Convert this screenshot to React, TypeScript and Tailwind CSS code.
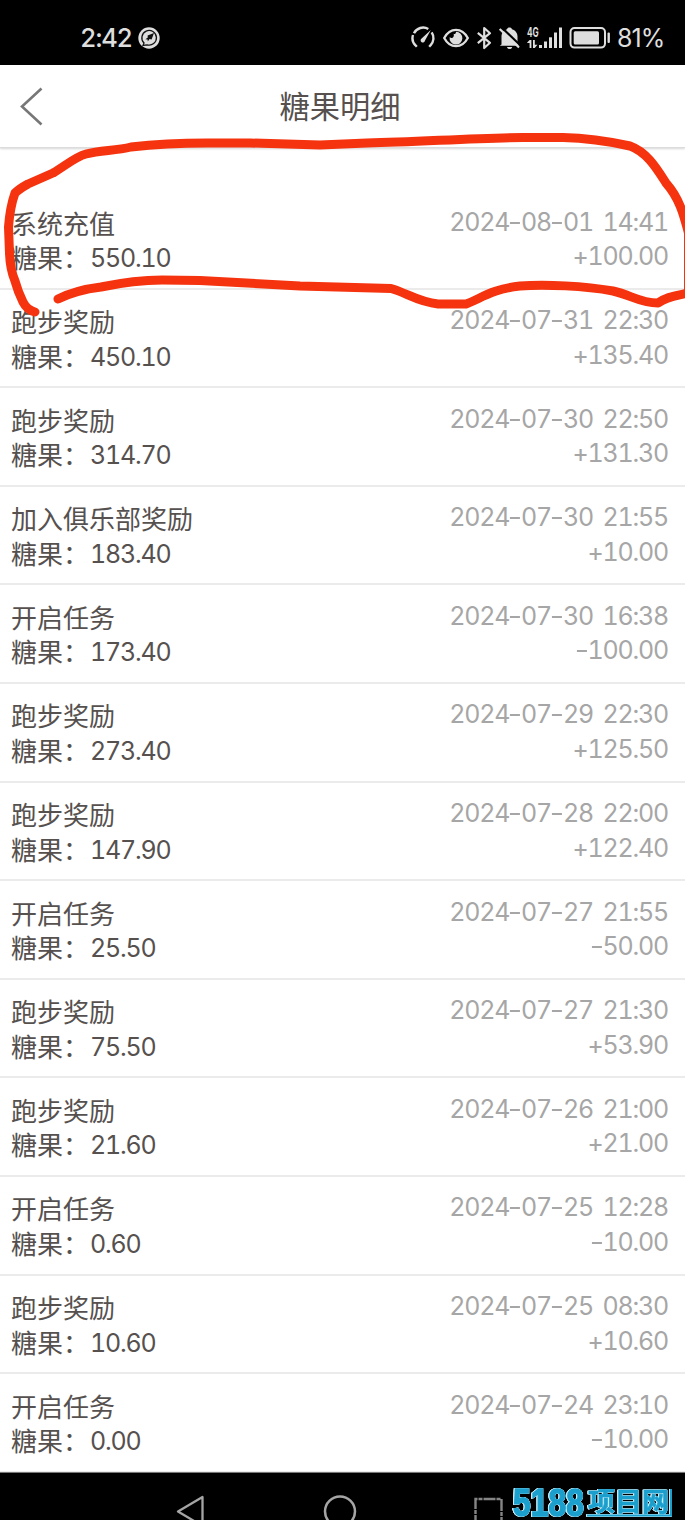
import React from "react";

type Entry = { title: string; balance: string; time: string; change: string };

const entries: Entry[] = [
  { title: "系统充值", balance: "550.10", time: "2024-08-01 14:41", change: "+100.00" },
  { title: "跑步奖励", balance: "450.10", time: "2024-07-31 22:30", change: "+135.40" },
  { title: "跑步奖励", balance: "314.70", time: "2024-07-30 22:50", change: "+131.30" },
  { title: "加入俱乐部奖励", balance: "183.40", time: "2024-07-30 21:55", change: "+10.00" },
  { title: "开启任务", balance: "173.40", time: "2024-07-30 16:38", change: "-100.00" },
  { title: "跑步奖励", balance: "273.40", time: "2024-07-29 22:30", change: "+125.50" },
  { title: "跑步奖励", balance: "147.90", time: "2024-07-28 22:00", change: "+122.40" },
  { title: "开启任务", balance: "25.50", time: "2024-07-27 21:55", change: "-50.00" },
  { title: "跑步奖励", balance: "75.50", time: "2024-07-27 21:30", change: "+53.90" },
  { title: "跑步奖励", balance: "21.60", time: "2024-07-26 21:00", change: "+21.00" },
  { title: "开启任务", balance: "0.60", time: "2024-07-25 12:28", change: "-10.00" },
  { title: "跑步奖励", balance: "10.60", time: "2024-07-25 08:30", change: "+10.60" },
  { title: "开启任务", balance: "0.00", time: "2024-07-24 23:10", change: "-10.00" },
];

function StatusBar() {
  return (
    <header className="flex h-[65px] items-center bg-black pt-[11px] pl-[80px] text-[#dedede]">
      <span className="w-[58px] font-['Inter',sans-serif] text-[25.5px] leading-none font-medium tracking-[-1.1px] tabular-nums">
        2:42
      </span>
      <svg className="h-[22px] w-[22px]" viewBox="0 0 22 22">
        <circle cx="11" cy="11" r="10.7" fill="#dedede" />
        <path d="M5 18.5L6 16A7.3 7.3 0 1 1 9 17.8Z" fill="none" stroke="#111" strokeWidth="1.3" />
        <path d="M16 6L13.6 12.4L11.5 12L9.8 14.5L9.6 12.5L7.4 12.2L9.8 10.4L9.6 8.5Z" fill="#111" />
      </svg>
      <div className="ml-[251px] flex items-center">
        <svg className="h-[24px] w-[24px]" viewBox="0 0 24 24" fill="none" stroke="#dedede" strokeWidth="2.4">
          <path d="M5.8 20.7L4.5 19.3A10.2 10.2 0 0 1 2 9" />
          <path d="M3 7.2A10.2 10.2 0 0 1 17.3 3" />
          <path d="M20.7 6.3A10.3 10.3 0 0 1 19.5 19.3L18.2 20.7" />
          <path d="M19.8 4L14 14.5A2.2 2.2 0 1 1 10.600 12.5Z" fill="#dedede" stroke="none" />
        </svg>
        <svg className="ml-[8px] h-[20px] w-[26px]" viewBox="0 0 26 20">
          <path d="M1.2 10C7-.9 19-.9 24.8 10C19 20.9 7 20.9 1.2 10Z" fill="none" stroke="#dedede" strokeWidth="2.3" />
          <path d="M13 3.800A6.4 6.4 0 1 1 6.7 9C8.500 11.500 12 9 10.500 5.800C11.500 6.500 13 6 13 3.800Z" fill="#dedede" />
        </svg>
        <svg className="ml-[7px] h-[24px] w-[16px]" viewBox="0 0 16 24">
          <path
            d="M1.8 6.8L14 16.8L8.2 22V2L14 7.2L1.8 17.2"
            fill="none"
            stroke="#dedede"
            strokeWidth="2.2"
            strokeLinejoin="round"
          />
        </svg>
        <svg className="ml-[6px] h-[24px] w-[23px]" viewBox="0 0 23 24">
          <path
            d="M3.5 18.5V10.5C3.5 6.8 6 4 9 3.2C9.4 .8 13.5 .8 14 3.2C17.3 4.2 19.5 7 19.5 10.5V16L21 19.8H1.8Z"
            fill="#dedede"
          />
          <path d="M9 21H14.2C13.8 23.8 9.5 23.8 9 21Z" fill="#dedede" />
          <path d="M3.6 1.4L22.5 19.5" stroke="#000" strokeWidth="2.2" />
          <path d="M1.7 3L21 21.5" stroke="#dedede" strokeWidth="2.2" />
        </svg>
        <svg className="ml-[6px] h-[24px] w-[36px]" viewBox="0 0 36 24" fill="#dedede">
          <text
            x="0"
            y="11"
            fontFamily="Inter, sans-serif"
            fontSize="13.5"
            fontWeight="700"
            textLength="11.8"
            lengthAdjust="spacingAndGlyphs"
          >
            4G
          </text>
          <path d="M.2 16.6L2.600 14H4.400V22H2.600V17H.2Z" />
          <path d="M6 14H7.800V18.800H10.400L7.800 22H6Z" />
          <rect x="12" y="19" width="3" height="3" />
          <rect x="17" y="15.5" width="3" height="6.5" />
          <rect x="22" y="11.3" width="3" height="10.7" />
          <rect x="27" y="6.5" width="3" height="15.5" />
          <rect x="32" y="1.5" width="3" height="20.5" />
        </svg>
        <svg className="ml-[6px] h-[24px] w-[42px]" viewBox="0 0 42 24">
          <rect x="1.5" y="2" width="34.5" height="19.6" rx="4" fill="none" stroke="#dedede" strokeWidth="2" />
          <rect x="4.7" y="5.2" width="25.3" height="13.2" rx="1.5" fill="#dedede" />
          <rect x="38.5" y="6.5" width="2.4" height="10.5" rx="1" fill="#dedede" />
        </svg>
        <span className="ml-[6px] pt-px font-['Inter',sans-serif] text-[25px] leading-none tracking-[-1px]">81%</span>
      </div>
    </header>
  );
}

function TitleBar() {
  return (
    <div className="relative flex h-[83px] items-center justify-center border-b border-[#dcdcdc] bg-white pr-[5px] pb-[2px] shadow-[0_1px_2px_rgba(0,0,0,0.16)]">
      <svg className="absolute top-[22px] left-[19px] h-[40px] w-[25px]" viewBox="0 0 25 40">
        <path d="M22.5 1.5L3 19.5L22.5 37.5" fill="none" stroke="#777" strokeWidth="2.6" />
      </svg>
      <h1 className="text-[30.3px] leading-none text-[#56514f]">糖果明细</h1>
    </div>
  );
}

function Figures({ value }: { value: string }) {
  return (
    <>
      {value.split(/(-)/).map((part, i) =>
        part === "-" ? (
          <span key={i} className="inline-block w-[11.8px] scale-x-125 text-center tracking-normal proportional-nums">
            -
          </span>
        ) : (
          <span key={i}>{part}</span>
        ),
      )}
    </>
  );
}

function EntryRow({ entry }: { entry: Entry }) {
  return (
    <li className="flex h-[98.6px] justify-between border-b-2 border-[#ebebeb] pr-[17px] pl-[11px]">
      <div className="pt-[14.5px] text-[26px] leading-[34.5px] text-[#56514f]">
        <p>{entry.title}</p>
        <p className="flex">
          <span className="w-[79px]">糖果：</span>
          <span className="pt-px font-['Inter',sans-serif] text-[25px] tracking-[-1.2px] tabular-nums">
            {entry.balance}
          </span>
        </p>
      </div>
      <div className="pt-[13.5px] text-right font-['Inter',sans-serif] text-[25px] leading-[34.5px] tracking-[-1.2px] text-[#a6a6a6] tabular-nums [word-spacing:4px]">
        <p>
          <Figures value={entry.time} />
        </p>
        <p>
          <Figures value={entry.change} />
        </p>
      </div>
    </li>
  );
}

function RedMarker() {
  return (
    <svg
      className="pointer-events-none absolute top-0 left-0 h-[330px] w-[685px]"
      viewBox="0 0 685 330"
      fill="none"
      stroke="#f5330f"
      strokeWidth="9"
      strokeLinecap="round"
      strokeLinejoin="round"
    >
      <path d="M35 312Q27 310 23 302Q18 292 15 281Q10 269 9.5 253L8.5 227Q10 207 15 193Q19 189 28 184L53 173C65 166 75 157 86 154C101 150 115 151 131 147C157 144 180 143 207 143L250 143L320 145L367 143C420 142 470 138 523 137.5L563 137.5C590 138 612 142 630 146C647 152 657 169 666 183C680 199 684 216 688.5 233L688.5 294" />
      <path d="M58 299C70 293 85 289 101 287C125 282 145 280 162 280L200 280.5L300 286L391 288.5C407 293 418 302 438 304L466 304C480 299 492 289 520 286C545 284 585 286 613 291C631 295 640 303 658 303C668 296 676 296 688 293" />
    </svg>
  );
}

function Watermark() {
  return (
    <svg
      className="h-[35px] w-[165px] [filter:drop-shadow(0.7px_0_0_#c8edf8)_drop-shadow(-0.7px_0_0_#c8edf8)_drop-shadow(0_0.7px_0_#c8edf8)]"
      viewBox="0 0 165 35"
    >
      <g fill="#1b9fcd" stroke="#1b9fcd">
        <text
          x="2"
          y="30"
          fontSize="38"
          fontWeight="700"
          strokeWidth="1.4"
          fontFamily="'Liberation Sans', sans-serif"
          textLength="71"
          lengthAdjust="spacingAndGlyphs"
        >
          5188
        </text>
        <text
          x="77"
          y="24.5"
          fontSize="26"
          fontWeight="700"
          strokeWidth="0.6"
          fontFamily="'Noto Sans CJK SC', sans-serif"
          textLength="81"
          lengthAdjust="spacingAndGlyphs"
        >
          项目网
        </text>
      </g>
      <path d="M76 29.500H160V3" fill="none" stroke="#1b9fcd" strokeWidth="2" />
    </svg>
  );
}

function NavigationBar() {
  return (
    <nav className="flex h-[48px] items-start overflow-hidden border-t border-[#777] bg-black pl-[175px]">
      <svg className="mt-[22px] h-[34px] w-[30px] shrink-0" viewBox="0 0 30 34">
        <path d="M3 16.5L27.5 2V31Z" fill="none" stroke="#a5a5a5" strokeWidth="2.3" strokeLinejoin="round" />
      </svg>
      <svg className="mt-[22px] ml-[118px] h-[34px] w-[34px] shrink-0" viewBox="0 0 34 34">
        <circle cx="17" cy="16.5" r="15" fill="none" stroke="#a5a5a5" strokeWidth="2.5" />
      </svg>
      <svg className="mt-[23px] ml-[116px] h-[34px] w-[32px] shrink-0" viewBox="0 0 32 34">
        <path d="M2.5 31V3H28.5V31" fill="none" stroke="#858585" strokeWidth="2.4" strokeDasharray="12 1 4 1" />
      </svg>
      <div className="mt-[13px] ml-[6px] shrink-0">
        <Watermark />
      </div>
    </nav>
  );
}

export default function App() {
  return (
    <main className="relative h-[1520px] w-[685px] overflow-hidden bg-white font-['Noto_Sans_CJK_SC',sans-serif]">
      <StatusBar />
      <TitleBar />
      <ul className="h-[1324px] overflow-hidden pt-[43px]">
        {entries.map((entry) => (
          <EntryRow key={entry.time} entry={entry} />
        ))}
      </ul>
      <NavigationBar />
      <RedMarker />
    </main>
  );
}
